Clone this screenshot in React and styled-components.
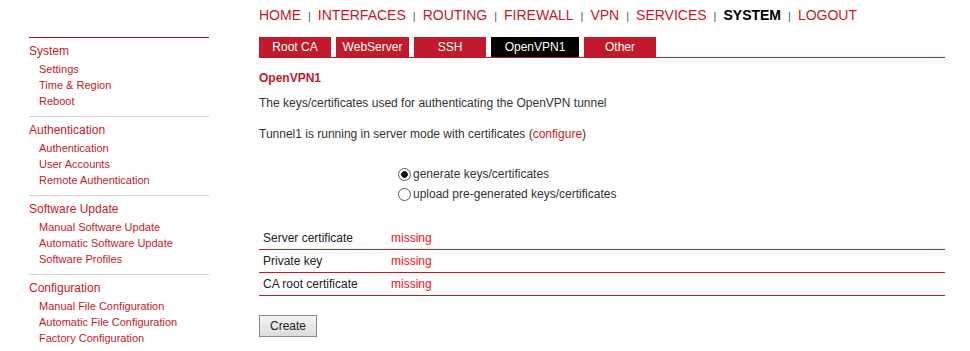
import React from "react";
import styled, { createGlobalStyle } from "styled-components";

const Global = createGlobalStyle`
  html, body { margin: 0; padding: 0; background: #fff; }
  body { font-family: "Liberation Sans", Arial, sans-serif; color: #333; }
`;

const RED = "#c01a2c";

const Layout = styled.div`
  display: flex;
  padding-left: 29px;
  gap: 50px;
  width: 970px;
  box-sizing: border-box;
`;

const Sidebar = styled.nav`
  width: 180px;
  margin-top: 37px;
  border-top: 1px solid #a3101f;
`;

const Group = styled.div`
  padding: 5px 0 7px;
  border-top: ${(p) => (p.$first ? "none" : "1px solid #d3d3d3")};
`;

const GroupTitle = styled.div`
  font-size: 12px;
  line-height: 16px;
  color: ${RED};
  margin-bottom: 2px;
`;

const GroupItem = styled.div`
  font-size: 11px;
  line-height: 16px;
  color: ${RED};
  padding-left: 10px;
`;

const Main = styled.main`
  width: 686px;
`;

const TopNav = styled.div`
  height: 30px;
  line-height: 30px;
  margin-bottom: 7px;
  font-size: 14px;
  white-space: nowrap;
`;

const NavLink = styled.span`
  color: ${(p) => (p.$active ? "#000" : RED)};
  font-weight: ${(p) => (p.$active ? "bold" : "normal")};
`;

const NavSep = styled.span`
  color: #555;
  font-size: 11px;
  margin: 0 7px;
`;

const TabBar = styled.div`
  display: flex;
  gap: 5px;
  height: 20px;
  border-bottom: 1px solid ${RED};
`;

const Tab = styled.div`
  width: ${(p) => p.$w}px;
  height: 20px;
  line-height: 20px;
  text-align: center;
  font-size: 12px;
  color: #fff;
  background: ${(p) => (p.$active ? "#000" : RED)};
`;

const Heading = styled.div`
  margin-top: 12px;
  font-size: 12px;
  line-height: 16px;
  font-weight: bold;
  color: ${RED};
`;

const Para = styled.div`
  margin-top: ${(p) => p.$mt}px;
  font-size: 12px;
  line-height: 16px;
  color: #333;
`;

const Link = styled.span`
  color: ${RED};
`;

const Radios = styled.div`
  margin-top: 22px;
  padding-left: 139px;
`;

const RadioRow = styled.label`
  display: flex;
  align-items: center;
  height: 20px;
  font-size: 12px;
  color: #333;
`;

const Radio = styled.input`
  appearance: none;
  box-sizing: border-box;
  width: 13px;
  height: 13px;
  margin: 0 2px 0 0;
  border: 1px solid #5a5a5a;
  border-radius: 50%;
  background: #fff;
  &:checked {
    background: radial-gradient(circle, #111 0 3px, #fff 3.6px);
  }
`;

const Table = styled.div`
  margin-top: 23px;
`;

const Row = styled.div`
  display: flex;
  align-items: center;
  height: 22px;
  border-bottom: 1px solid ${RED};
  font-size: 12px;
`;

const Label = styled.div`
  width: 128px;
  padding-left: 4px;
  color: #222;
`;

const Value = styled.div`
  color: #f0101e;
`;

const Button = styled.button`
  margin-top: 19px;
  width: 58px;
  height: 22px;
  font-family: "Liberation Sans", Arial, sans-serif;
  font-size: 12px;
  color: #222;
  border: 1px solid #8a8a8a;
  background: linear-gradient(#f4f4f4, #dcdcdc);
  padding: 0;
`;

const groups = [
  { title: "System", items: ["Settings", "Time & Region", "Reboot"] },
  { title: "Authentication", items: ["Authentication", "User Accounts", "Remote Authentication"] },
  { title: "Software Update", items: ["Manual Software Update", "Automatic Software Update", "Software Profiles"] },
  { title: "Configuration", items: ["Manual File Configuration", "Automatic File Configuration", "Factory Configuration"] },
];

const nav = ["HOME", "INTERFACES", "ROUTING", "FIREWALL", "VPN", "SERVICES", "SYSTEM", "LOGOUT"];

const tabs = [
  { label: "Root CA", w: 72 },
  { label: "WebServer", w: 73 },
  { label: "SSH", w: 72 },
  { label: "OpenVPN1", w: 88, active: true },
  { label: "Other", w: 72 },
];

const rows = ["Server certificate", "Private key", "CA root certificate"];

export default function App() {
  return (
    <>
      <Global />
      <Layout>
        <Sidebar>
          {groups.map((g, i) => (
            <Group key={g.title} $first={i === 0}>
              <GroupTitle>{g.title}</GroupTitle>
              {g.items.map((it) => (
                <GroupItem key={it}>{it}</GroupItem>
              ))}
            </Group>
          ))}
        </Sidebar>
        <Main>
          <TopNav>
            {nav.map((n, i) => (
              <React.Fragment key={n}>
                {i > 0 && <NavSep>|</NavSep>}
                <NavLink $active={n === "SYSTEM"}>{n}</NavLink>
              </React.Fragment>
            ))}
          </TopNav>
          <TabBar>
            {tabs.map((t) => (
              <Tab key={t.label} $w={t.w} $active={t.active}>
                {t.label}
              </Tab>
            ))}
          </TabBar>
          <Heading>OpenVPN1</Heading>
          <Para $mt={9}>The keys/certificates used for authenticating the OpenVPN tunnel</Para>
          <Para $mt={15}>
            Tunnel1 is running in server mode with certificates (<Link>configure</Link>)
          </Para>
          <Radios>
            <RadioRow>
              <Radio type="radio" name="mode" defaultChecked />
              generate keys/certificates
            </RadioRow>
            <RadioRow>
              <Radio type="radio" name="mode" />
              upload pre-generated keys/certificates
            </RadioRow>
          </Radios>
          <Table>
            {rows.map((r) => (
              <Row key={r}>
                <Label>{r}</Label>
                <Value>missing</Value>
              </Row>
            ))}
          </Table>
          <Button>Create</Button>
        </Main>
      </Layout>
    </>
  );
}
